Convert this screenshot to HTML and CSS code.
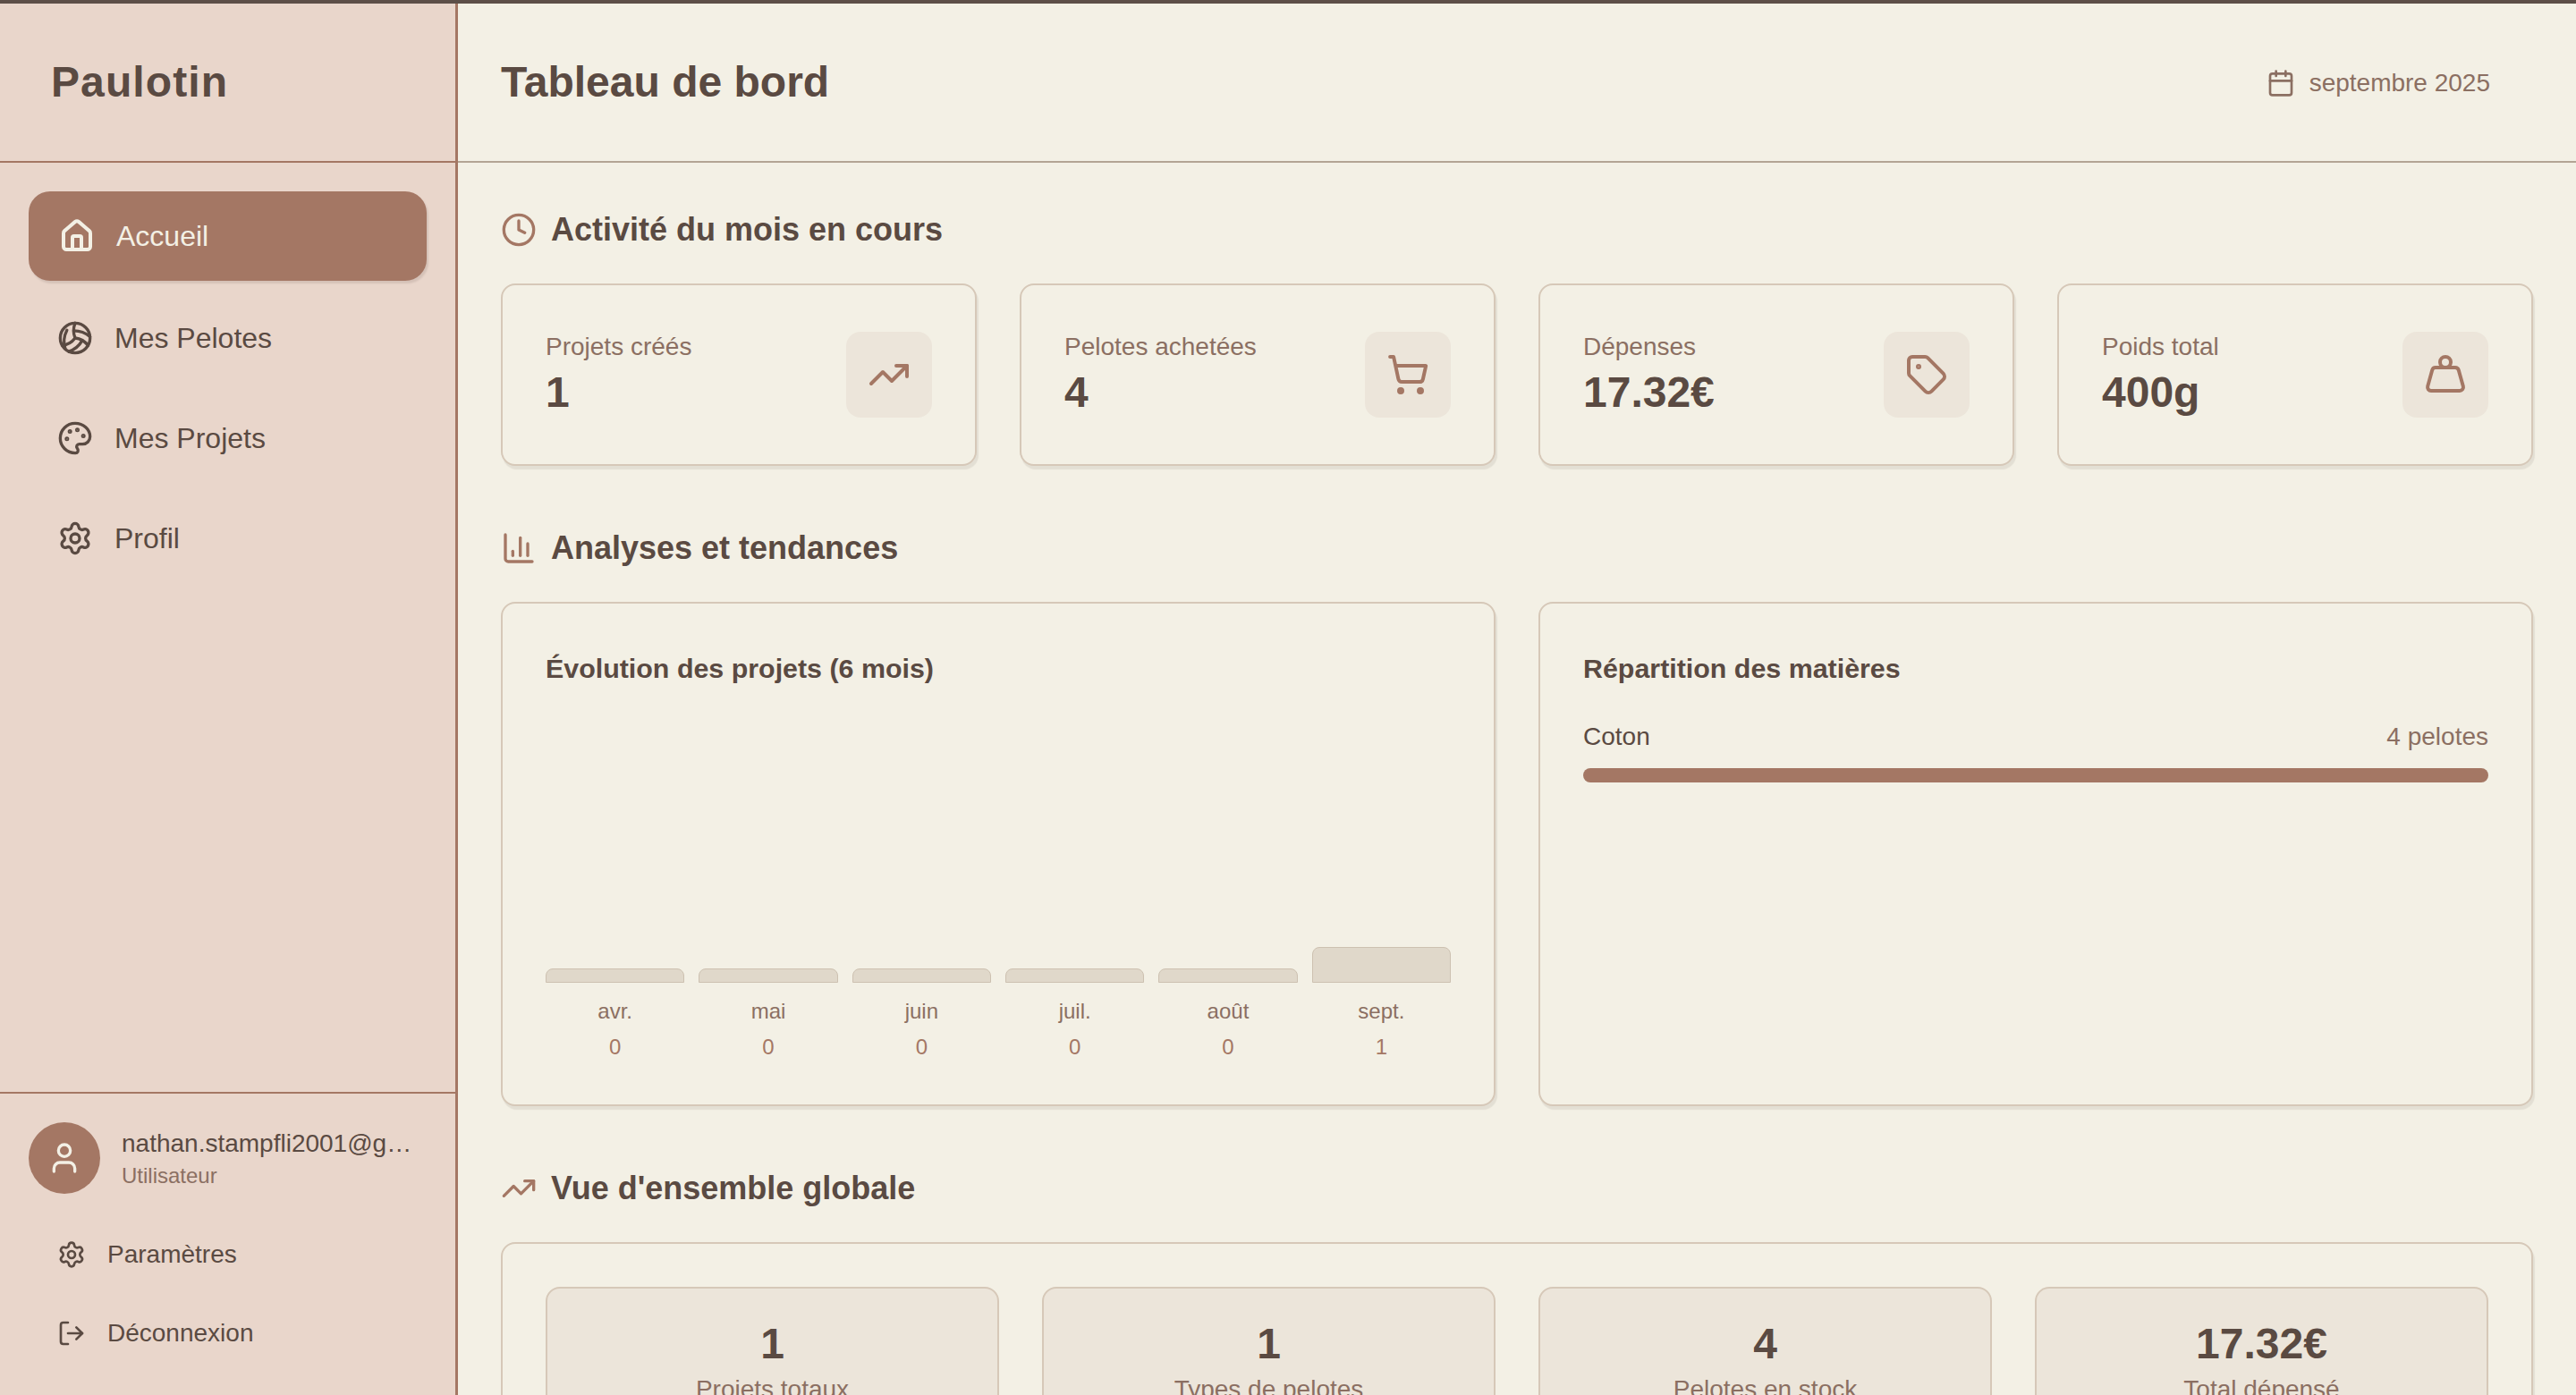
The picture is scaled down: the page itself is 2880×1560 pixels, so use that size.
FILE: index.html
```html
<!DOCTYPE html>
<html lang="fr">
<head>
<meta charset="utf-8">
<title>Paulotin</title>
<link rel="stylesheet" href="styles.css">
</head>
<body>
<div class="app">
  <aside class="sidebar">
    <div class="brand"><h1>Paulotin</h1></div>
    <nav class="nav">
      <a class="nav-item active"><svg class="ic ic-nav" viewBox="0 0 24 24"><path d="M15 21v-8a1 1 0 0 0-1-1h-4a1 1 0 0 0-1 1v8"/><path d="M3 10a2 2 0 0 1 .709-1.528l7-5.999a2 2 0 0 1 2.582 0l7 5.999A2 2 0 0 1 21 10v9a2 2 0 0 1-2 2H5a2 2 0 0 1-2-2z"/></svg><span>Accueil</span></a>
      <a class="nav-item"><svg class="ic ic-nav" viewBox="0 0 24 24"><path d="M11.1 7.1a16.55 16.55 0 0 1 10.9 4"/><path d="M12 12a12.6 12.6 0 0 1-8.7 5"/><path d="M16.8 13.6a16.55 16.55 0 0 1-9 7.5"/><path d="M20.7 17a12.8 12.8 0 0 0-8.7-5 13.3 13.3 0 0 1 0-10"/><path d="M6.5 6.7a16.6 16.6 0 0 0-1.2 12.4"/><circle cx="12" cy="12" r="10"/></svg><span>Mes Pelotes</span></a>
      <a class="nav-item"><svg class="ic ic-nav" viewBox="0 0 24 24"><path d="M12 22a1 1 0 0 1 0-20 10 9 0 0 1 10 9 5 5 0 0 1-5 5h-2.25a1.75 1.75 0 0 0-1.4 2.8l.3.4a1.75 1.75 0 0 1-1.4 2.8z"/><circle class="dot" cx="13.5" cy="6.5" r=".5"/><circle class="dot" cx="17.5" cy="10.5" r=".5"/><circle class="dot" cx="6.5" cy="12.5" r=".5"/><circle class="dot" cx="8.5" cy="7.5" r=".5"/></svg><span>Mes Projets</span></a>
      <a class="nav-item"><svg class="ic ic-nav" viewBox="0 0 24 24"><path d="M9.671 4.136a2.34 2.34 0 0 1 4.659 0 2.34 2.34 0 0 0 3.319 1.915 2.34 2.34 0 0 1 2.33 4.033 2.34 2.34 0 0 0 0 3.831 2.34 2.34 0 0 1-2.33 4.033 2.34 2.34 0 0 0-3.319 1.915 2.34 2.34 0 0 1-4.659 0 2.34 2.34 0 0 0-3.32-1.915 2.34 2.34 0 0 1-2.33-4.033 2.34 2.34 0 0 0 0-3.831A2.34 2.34 0 0 1 6.35 6.051a2.34 2.34 0 0 0 3.319-1.915"/><circle cx="12" cy="12" r="3"/></svg><span>Profil</span></a>
    </nav>
    <div class="side-foot">
      <div class="user">
        <div class="avatar"><svg class="ic ic-user" viewBox="0 0 24 24"><path d="M19 21v-2a4 4 0 0 0-4-4H9a4 4 0 0 0-4 4v2"/><circle cx="12" cy="7" r="4"/></svg></div>
        <div class="user-text">
          <div class="user-mail">nathan.stampfli2001@g…</div>
          <div class="user-role">Utilisateur</div>
        </div>
      </div>
      <a class="foot-item"><svg class="ic ic-foot" viewBox="0 0 24 24"><path d="M9.671 4.136a2.34 2.34 0 0 1 4.659 0 2.34 2.34 0 0 0 3.319 1.915 2.34 2.34 0 0 1 2.33 4.033 2.34 2.34 0 0 0 0 3.831 2.34 2.34 0 0 1-2.33 4.033 2.34 2.34 0 0 0-3.319 1.915 2.34 2.34 0 0 1-4.659 0 2.34 2.34 0 0 0-3.32-1.915 2.34 2.34 0 0 1-2.33-4.033 2.34 2.34 0 0 0 0-3.831A2.34 2.34 0 0 1 6.35 6.051a2.34 2.34 0 0 0 3.319-1.915"/><circle cx="12" cy="12" r="3"/></svg><span>Paramètres</span></a>
      <a class="foot-item"><svg class="ic ic-foot" viewBox="0 0 24 24"><path d="m16 17 5-5-5-5"/><path d="M21 12H9"/><path d="M9 21H5a2 2 0 0 1-2-2V5a2 2 0 0 1 2-2h4"/></svg><span>Déconnexion</span></a>
    </div>
  </aside>
  <main class="main">
    <header class="topbar">
      <h2>Tableau de bord</h2>
      <div class="date"><svg class="ic ic-date" viewBox="0 0 24 24"><path d="M8 2v4"/><path d="M16 2v4"/><rect x="3" y="4" width="18" height="18" rx="2"/><path d="M3 10h18"/></svg><span>septembre 2025</span></div>
    </header>
    <div class="content">
      <section class="section">
        <h3 class="sec-title"><svg class="ic ic-sec" viewBox="0 0 24 24"><circle cx="12" cy="12" r="10"/><path d="M12 6v6l4 2"/></svg>Activité du mois en cours</h3>
        <div class="stats">
          <div class="card stat"><div class="stat-text"><div class="stat-label">Projets créés</div><div class="stat-value">1</div></div><div class="stat-icon"><svg class="ic ic-stat" viewBox="0 0 24 24"><path d="M16 7h6v6"/><path d="m22 7-8.5 8.5-5-5L2 17"/></svg></div></div>
          <div class="card stat"><div class="stat-text"><div class="stat-label">Pelotes achetées</div><div class="stat-value">4</div></div><div class="stat-icon"><svg class="ic ic-stat" viewBox="0 0 24 24"><circle cx="8" cy="21" r="1"/><circle cx="19" cy="21" r="1"/><path d="M2.05 2.05h2l2.66 12.42a2 2 0 0 0 2 1.58h9.78a2 2 0 0 0 1.95-1.57l1.65-7.43H5.12"/></svg></div></div>
          <div class="card stat"><div class="stat-text"><div class="stat-label">Dépenses</div><div class="stat-value">17.32€</div></div><div class="stat-icon"><svg class="ic ic-stat" viewBox="0 0 24 24"><path d="M12.586 2.586A2 2 0 0 0 11.172 2H4a2 2 0 0 0-2 2v7.172a2 2 0 0 0 .586 1.414l8.704 8.704a2.426 2.426 0 0 0 3.42 0l6.58-6.58a2.426 2.426 0 0 0 0-3.42z"/><circle class="dot" cx="7.5" cy="7.5" r=".5"/></svg></div></div>
          <div class="card stat"><div class="stat-text"><div class="stat-label">Poids total</div><div class="stat-value">400g</div></div><div class="stat-icon"><svg class="ic ic-stat" viewBox="0 0 24 24"><circle cx="12" cy="5" r="3"/><path d="M6.5 8a2 2 0 0 0-1.905 1.46L2.1 18.5A2 2 0 0 0 4 21h16a2 2 0 0 0 1.925-2.54L19.4 9.5A2 2 0 0 0 17.48 8Z"/></svg></div></div>
        </div>
      </section>
      <section class="section">
        <h3 class="sec-title"><svg class="ic ic-sec" viewBox="0 0 24 24"><path d="M3 3v16a2 2 0 0 0 2 2h16"/><path d="M18 17V9"/><path d="M13 17V5"/><path d="M8 17v-3"/></svg>Analyses et tendances</h3>
        <div class="charts">
          <div class="card chart">
            <h4>Évolution des projets (6 mois)</h4>
            <div class="bars">
              <div class="bar-col"><div class="bar"></div><div class="bar-month">avr.</div><div class="bar-num">0</div></div>
              <div class="bar-col"><div class="bar"></div><div class="bar-month">mai</div><div class="bar-num">0</div></div>
              <div class="bar-col"><div class="bar"></div><div class="bar-month">juin</div><div class="bar-num">0</div></div>
              <div class="bar-col"><div class="bar"></div><div class="bar-month">juil.</div><div class="bar-num">0</div></div>
              <div class="bar-col"><div class="bar"></div><div class="bar-month">août</div><div class="bar-num">0</div></div>
              <div class="bar-col"><div class="bar bar-high"></div><div class="bar-month">sept.</div><div class="bar-num">1</div></div>
            </div>
          </div>
          <div class="card chart">
            <h4>Répartition des matières</h4>
            <div class="mat-row"><span class="mat-name">Coton</span><span class="mat-count">4 pelotes</span></div>
            <div class="mat-bar"></div>
          </div>
        </div>
      </section>
      <section class="section">
        <h3 class="sec-title"><svg class="ic ic-sec" viewBox="0 0 24 24"><path d="M16 7h6v6"/><path d="m22 7-8.5 8.5-5-5L2 17"/></svg>Vue d'ensemble globale</h3>
        <div class="card overview">
          <div class="ov"><div class="ov-value">1</div><div class="ov-label">Projets totaux</div></div>
          <div class="ov"><div class="ov-value">1</div><div class="ov-label">Types de pelotes</div></div>
          <div class="ov"><div class="ov-value">4</div><div class="ov-label">Pelotes en stock</div></div>
          <div class="ov"><div class="ov-value">17.32€</div><div class="ov-label">Total dépensé</div></div>
        </div>
      </section>
    </div>
  </main>
</div>
</body>
</html>
```
FILE: styles.css
```css
* { box-sizing: border-box; margin: 0; padding: 0; }
html, body { height: 100%; overflow: hidden; }
body {
  background: #f3f0e5;
  color: #5a4a42;
  font-family: "Liberation Sans", Arial, sans-serif;
}
.app {
  display: flex;
  height: 1560px;
  border-top: 4px solid #5d4f48;
}
.ic {
  fill: none;
  stroke: currentColor;
  stroke-width: 2;
  stroke-linecap: round;
  stroke-linejoin: round;
  flex: none;
  display: block;
}
.ic .dot { fill: currentColor; }

/* sidebar */
.sidebar {
  width: 512px;
  flex: none;
  background: #e9d6cb;
  border-right: 3px solid #a47764;
  display: flex;
  flex-direction: column;
}
.brand {
  height: 178px;
  border-bottom: 2px solid #a47764;
  padding: 0 57px 2px;
  display: flex;
  align-items: center;
}
.brand h1 {
  font-size: 48px;
  font-weight: 700;
  letter-spacing: 1.1px;
}
.nav {
  flex: 1;
  padding: 34px 32px 32px;
  display: flex;
  flex-direction: column;
  gap: 12px;
}
.nav-item {
  height: 100px;
  padding: 0 32px;
  display: flex;
  align-items: center;
  gap: 24px;
  border-radius: 24px;
  font-size: 32px;
  color: #5a4a42;
}
.nav-item.active {
  background: #a47764;
  color: #f3f0e5;
  padding-left: 34px;
  transform: translateY(-2px);
  box-shadow: 2px 3px 2px rgba(90, 74, 66, .14);
}
.nav-item.active .ic { stroke-width: 2.4; }
.ic-nav { width: 40px; height: 40px; }
.side-foot {
  border-top: 2px solid #a47764;
  padding: 32px 32px 25px;
}
.user {
  display: flex;
  align-items: center;
  gap: 24px;
  margin-bottom: 24px;
}
.avatar {
  width: 80px;
  height: 80px;
  border-radius: 50%;
  background: #a47764;
  color: #f3f0e5;
  display: flex;
  align-items: center;
  justify-content: center;
  flex: none;
}
.ic-user { width: 40px; height: 40px; }
.user-text { min-width: 0; flex: 1; }
.user-mail {
  font-size: 28px;
  line-height: 40px;
  white-space: nowrap;
}
.user-role {
  font-size: 24px;
  line-height: 32px;
  color: #8b6f62;
}
.foot-item {
  height: 88px;
  padding: 0 32px;
  display: flex;
  align-items: center;
  gap: 24px;
  font-size: 28px;
  color: #5a4a42;
}
.ic-foot { width: 32px; height: 32px; }

/* main */
.main { flex: 1; min-width: 0; display: flex; flex-direction: column; }
.topbar {
  height: 178px;
  flex: none;
  border-bottom: 2px solid #b3a494;
  padding: 0 96px 2px 48px;
  display: flex;
  align-items: center;
  justify-content: space-between;
}
.topbar h2 { font-size: 48px; font-weight: 700; }
.date {
  display: flex;
  align-items: center;
  gap: 16px;
  font-size: 28px;
  color: #8b6f62;
  margin-top: 3px;
}
.ic-date { width: 32px; height: 32px; }
.content {
  padding: 51px 48px 32px;
  overflow: hidden;
  flex: 1;
}
.section { margin-bottom: 68px; }
.sec-title {
  display: flex;
  align-items: center;
  gap: 16px;
  font-size: 36px;
  line-height: 48px;
  font-weight: 700;
  margin-bottom: 36px;
}
.ic-sec { width: 40px; height: 40px; color: #a47764; }
.card {
  background: #f3f0e5;
  border: 2px solid #d6c8b8;
  border-radius: 16px;
  box-shadow: 2px 4px 1px rgba(90, 74, 66, .1);
}
.stats {
  display: grid;
  grid-template-columns: repeat(4, 1fr);
  gap: 48px;
}
.stat {
  height: 204px;
  padding: 0 48px;
  display: flex;
  align-items: center;
  justify-content: space-between;
}
.stat-text { margin-bottom: 4px; }
.stat-label {
  font-size: 28px;
  line-height: 40px;
  color: #8b6f62;
}
.stat-value {
  font-size: 48px;
  line-height: 56px;
  font-weight: 700;
  margin-top: 3px;
}
.stat-icon {
  width: 96px;
  height: 96px;
  border-radius: 16px;
  background: #ece5da;
  color: #a47764;
  display: flex;
  align-items: center;
  justify-content: center;
}
.ic-stat { width: 48px; height: 48px; }
.charts {
  display: grid;
  grid-template-columns: 1fr 1fr;
  gap: 48px;
}
.chart { height: 564px; padding: 48px; display: flex; flex-direction: column; }
.chart h4 {
  font-size: 30.4px;
  line-height: 48px;
  font-weight: 700;
}
.bars {
  flex: 1;
  display: flex;
  align-items: flex-end;
  gap: 16px;
}
.bar-col { flex: 1; display: flex; flex-direction: column; align-items: stretch; text-align: center; }
.bar {
  height: 16px;
  background: #e0d8ca;
  border: 1px solid #cdc1b1;
  border-radius: 8px 8px 0 0;
}
.bar-high { height: 40px; }
.bar-month {
  font-size: 24px;
  line-height: 32px;
  color: #8b6f62;
  margin-top: 16px;
}
.bar-num {
  font-size: 24px;
  line-height: 32px;
  color: #a47764;
  margin-top: 8px;
}
.mat-row {
  display: flex;
  justify-content: space-between;
  font-size: 28px;
  line-height: 40px;
  margin-top: 33px;
}
.mat-count { color: #8b6f62; }
.mat-bar {
  height: 16px;
  margin-top: 15px;
  background: #a47764;
  border-radius: 8px;
}
.overview {
  padding: 48px;
  display: grid;
  grid-template-columns: repeat(4, 1fr);
  gap: 48px;
}
.ov {
  background: #ece5da;
  border: 2px solid #d6c8b8;
  border-radius: 16px;
  padding: 34px 32px 32px;
  text-align: center;
}
.ov-value { font-size: 48px; line-height: 56px; font-weight: 700; }
.ov-label { font-size: 28px; line-height: 40px; color: #8b6f62; margin-top: 3px; }
```
